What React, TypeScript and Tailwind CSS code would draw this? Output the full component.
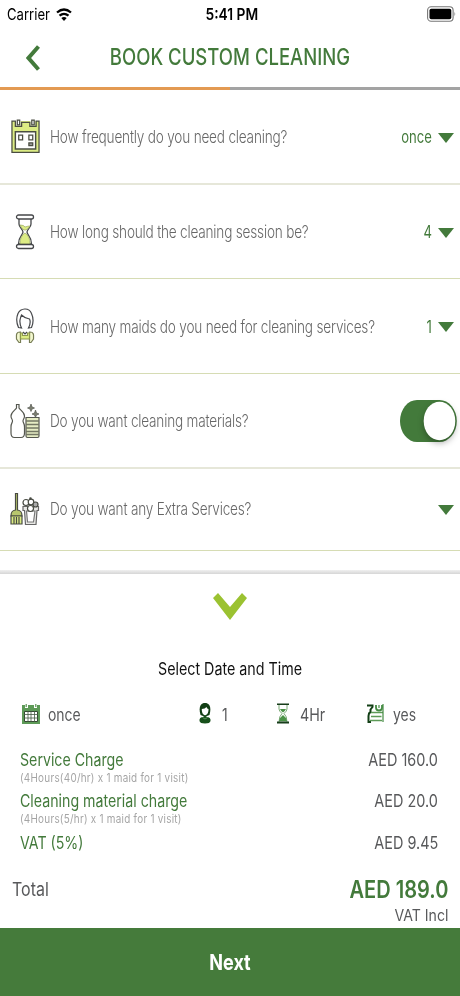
import React from 'react';
import clsx from 'clsx';

const Label: React.FC<{ className?: string; children: React.ReactNode }> = ({ className, children }) => (
  <span className={clsx('block whitespace-nowrap', className)}>{children}</span>
);

const CalendarIcon = () => (
  <svg width="29" height="35" viewBox="0 0 30 36" fill="none" stroke="#4a4d42" strokeWidth="1.3">
    <path d="M1 2H5V7H10V2H20V7H25V2H29V34.500H1Z" fill="#dcec84" stroke="none" />
    <path d="M1 34.500V2H4.500V7.500H11V3.500H19.500V7.500H26V2H29V34.500Z" />
    <path d="M6.500 1H9V6H6.500ZM21.500 1H24V6H21.500Z" fill="#fff" />
    <path d="M4.500 13H25.500V31H4.500Z" fill="#fff" strokeWidth="1.500" />
    <path d="M8 16.500H12V21.500H8ZM18.500 16.500H22.500V21.500H18.500Z" />
    <path d="M18.500 24.500H22.500V27.500H18.500Z" fill="#999" />
  </svg>
);

const HourglassIcon = () => (
  <svg width="20" height="36" viewBox="0 0 20 36" fill="none" stroke="#45474a" strokeWidth="1.3">
    <path d="M4 5V10C4 14 8 15 8 18C8 21 3.500 22 3.500 30H16.500C16.500 22 12 21 12 18C12 15 16 14 16 10V5" fill="#fff" />
    <path d="M5 11Q9 11 10 13Q13 12 15 12Q14 14 11 16H9Q6 14 5 11ZM10 19Q5 22 5 30H15Q15 22 10 19Z" fill="#dcec84" stroke="#9aa85c" strokeWidth=".7" />
    <rect x="1.500" y="1" width="17" height="4" rx="2" fill="#fff" />
    <rect x="1.500" y="30.500" width="17" height="4" rx="2" fill="#fff" />
  </svg>
);

const MaidIcon = () => (
  <svg width="20" height="36" viewBox="0 0 20 36" fill="none" stroke="#45474a" strokeWidth="1.2">
    <path d="M3.500 19.500C1.500 15 1.500 9 3 5.500C5.500 0 14 -1 16.500 5.500C18.500 10 18.500 15 16.500 19.500L13.500 20C15.500 16 15.500 13 14.500 11Q10 10.500 6.500 7Q5.500 9.500 5 12Q4.500 16 6.500 20Z" />
    <path d="M5 24C.5 24 1.500 28 1.500 31L4 34.500H5.500V24ZM15 24C19.500 24 18.500 28 18.500 31L16 34.500H14.500V24Z" fill="#f3f8cf" stroke="#777d55" />
    <path d="M5.500 25H7.500V27.500H12.500V25H14.500V31H5.500Z" fill="#dcec84" stroke="#8c964e" />
    <path d="M8 24L10 26L12 24" />
  </svg>
);

const MaterialsIcon = () => (
  <svg width="30" height="36" viewBox="0 0 30 36" fill="none" stroke="#55574f" strokeWidth="1.2">
    <path d="M6.500 1.500H9V5C10 7 14.500 9 14.500 13C14.500 16 13 16 13 18C13 20 14.500 20 14.500 24V30C14.500 33 13.500 34.500 11 34.500H4.500C2 34.500 1 33 1 30V24C1 20 2.500 20 2.500 18C2.500 16 1 16 1 13C1 9 5.500 7 6.500 5Z" />
    <path d="M16 14.500H29V33Q29 34.500 27.500 34.500H17.500Q16 34.500 16 33Z" fill="#e6edc4" />
    <path d="M16 18H29M16 21.500H29M16 25H29M16 28.500H29M16 31.500H29" stroke="#747864" strokeWidth="1.500" />
    <path d="M21 1L22 4L24.500 5L22 6L21 8.500L20 6L17.500 5L20 4ZM25.500 7L26.500 10L29 11L26.500 12L25.500 14.500L24.500 12L22 11L24.500 10Z" fill="#7a7d70" strokeWidth=".7" />
  </svg>
);

const ExtrasIcon = () => (
  <svg width="30" height="34" viewBox="0 0 30 34" fill="none" stroke="#484b43" strokeWidth="1.2">
    <path d="M5.500 1.500H7.500V18C11 18.500 12 20 12 24H1C1 20 2 18.500 5.500 18Z" fill="#b8c66e" />
    <path d="M1 24H12V32H1ZM4 25V32M6.500 25V32M9 25V32" fill="#dcec84" />
    <path d="M13 14.500H28.500V18.500H27L26 32.500H15.500L14.500 18.500H13Z" fill="#e8e8e5" stroke="#666" />
    <path d="M16.500 19H25L23.500 30H17.500Z" fill="#fff" stroke="#777" />
    <circle cx="16" cy="10.500" r="3" fill="#fff" />
    <circle cx="21" cy="10" r="2.800" fill="#fff" />
    <circle cx="25.500" cy="12.500" r="2.500" fill="#aaa" />
    <circle cx="20.500" cy="16.500" r="3" fill="#fff" />
    <circle cx="20.500" cy="6.500" r=".7" />
  </svg>
);

const Caret = () => (
  <svg width="16" height="12" viewBox="0 0 16 12" className="shrink-0">
    <path d="M0 2H16L8 12Z" fill="#437a3b" />
  </svg>
);

const Toggle = () => (
  <svg width="57" height="42" viewBox="0 0 57 42" className="mr-[3px] shrink-0 overflow-visible">
    <path d="M17 0H39.500A17.300 21 0 0 1 39.500 42H17A17 21 0 0 1 17 0Z" fill="#437a3b" />
    <ellipse cx="39.500" cy="21" rx="15.800" ry="19.300" fill="#fff" className="drop-shadow-[0_3px_3px_rgba(0,0,0,0.3)]" />
  </svg>
);

const questions = [
  { icon: <CalendarIcon />, text: 'How frequently do you need cleaning?', value: 'once', row: 'h-[95px] border-b-2 border-[#e6e7d9]' },
  { icon: <HourglassIcon />, text: 'How long should the cleaning session be?', value: '4', row: 'h-[94px] border-b border-[#d6dcb4]' },
  { icon: <MaidIcon />, text: 'How many maids do you need for cleaning services?', value: '1', row: 'h-[95px] border-b border-[#d6dcb4]' },
  { icon: <MaterialsIcon />, text: 'Do you want cleaning materials?', toggle: true, row: 'h-[95px] border-b-2 border-[#e6e7d9]' },
  { icon: <ExtrasIcon />, text: 'Do you want any Extra Services?', value: '', row: 'h-[82px] border-b border-[#d6dcb4] pb-0.5' },
];

const SmallCalendar = () => (
  <svg width="18" height="20" viewBox="0 0 18 20">
    <path d="M0 1H3V4H6V1H12V4H15V1H18V20H0Z" fill="#5d9a57" />
    <path d="M3.500 0H5V3H3.500ZM13 0H14.500V3H13Z" fill="#78a873" />
    <path d="M2.500 7.500H15.500V17.500H2.500Z" fill="#fff" stroke="#344a32" />
    <path d="M6 7V18M9 7V18M12.500 7V18M2 10.500H16M2 14H16" stroke="#455a43" strokeWidth=".8" />
  </svg>
);

const SmallMaid = () => (
  <svg width="12" height="21" viewBox="0 0 12 21">
    <path d="M1.500 12C-.5 5 1 0 6 0S12.500 5 10.500 12L8 13H4Z" fill="#123f15" />
    <path d="M2.800 6Q6 6 7.500 4Q8 6 9.500 6Q9.800 11 6 12.500Q2.500 11 2.800 6Z" fill="#fff" />
    <path d="M4.500 12.500H7.500V14Q12 14 11.500 18Q11 20.500 6 20.500T.5 18Q0 14 4.500 14Z" fill="#17501b" />
    <path d="M3.500 14.500L6 16L8.500 14.500" stroke="#5a915a" fill="none" />
  </svg>
);

const SmallHourglass = () => (
  <svg width="12" height="21" viewBox="0 0 12 21">
    <path d="M2 2V6Q2 8 5 10.500Q2 13 2 19H10Q10 13 7 10.500Q10 8 10 6V2" fill="#fff" stroke="#7cab78" />
    <path d="M3 6H9Q8 8 6 9.500Q4 8 3 6ZM6 12Q9 14 10 18H2Q3 14 6 12Z" fill="#4b9347" />
    <path d="M0 .5H12V2H0ZM0 18.500H12V20.500H0Z" fill="#173d1a" />
  </svg>
);

const SmallMaterials = () => (
  <svg width="17" height="19" viewBox="0 0 17 19" fill="none">
    <path d="M0 1.500H5.500V3L3.500 5.500V8Q1.500 9 1.500 12V18H4" stroke="#123f15" strokeWidth="2" />
    <path d="M4 8.500H16M4 12.500H14.500M3 16.500H15" stroke="#5d9a57" strokeWidth="1.300" />
    <path d="M9 1V3.500Q9 6.500 12 6.500T15 3.500V1" stroke="#438a42" strokeWidth="1.800" />
    <path d="M16 0V18M12 1V4" stroke="#438a42" strokeWidth="1.200" />
  </svg>
);

const charges = [
  { name: 'Service Charge', note: '(4Hours(40/hr) x 1 maid for 1 visit)', amount: 'AED 160.0' },
  { name: 'Cleaning material charge', note: '(4Hours(5/hr) x 1 maid for 1 visit)', amount: 'AED 20.0' },
  { name: 'VAT (5%)', amount: 'AED 9.45' },
];

const App: React.FC = () => {
  return (
    <div className="flex h-[996px] w-[460px] flex-col overflow-hidden bg-white font-['Inter',sans-serif] text-[#58595b]">
      {/* Status bar */}
      <div className="grid h-7 shrink-0 grid-cols-3 items-center pl-[7px] pr-1 text-black">
        <div className="flex items-center">
          <div className="w-[49px]">
            <Label className="origin-left scale-x-[0.82] text-base leading-6">Carrier</Label>
          </div>
          <svg width="16" height="13" viewBox="0 0 16 13" fill="none" stroke="#000" strokeWidth="2.300">
            <path d="M1 4.500Q8 -1.500 15 4.500M3.500 7.700Q8 4 12.500 7.700" />
            <path d="M5.300 10Q8 7.800 10.700 10L8 13Z" fill="#000" stroke="none" />
          </svg>
        </div>
        <Label className="scale-x-[0.86] text-center text-base font-semibold leading-6">5:41 PM</Label>
        <svg width="29" height="16" viewBox="0 0 29 16" className="justify-self-end">
          <rect x=".6" y=".8" width="25.500" height="14.400" rx="3.500" fill="#fff" stroke="#777" strokeWidth="1.100" />
          <rect x="2.500" y="2.800" width="21.800" height="10.400" rx="1.800" />
          <path d="M27.500 5.500Q29 8 27.500 10.500Z" fill="#777" />
        </svg>
      </div>

      {/* Header */}
      <div className="flex h-[59px] shrink-0 items-center">
        <svg width="14" height="26" viewBox="0 0 14 26" fill="none" className="ml-[26px]">
          <path d="M12.500 1.500L2.500 13L12.500 24.500" stroke="#437a3b" strokeWidth="4" />
        </svg>
        <Label className="ml-10 w-[300px] scale-x-[0.805] text-center text-[23px] font-medium text-[#437a3b]">BOOK CUSTOM CLEANING</Label>
      </div>
      <div className="flex h-[3px] shrink-0">
        <div className="w-1/2 bg-[#e39a52]" />
        <div className="w-1/2 bg-[#a3a3a3]" />
      </div>

      {/* Questions */}
      {questions.map((q) => (
        <div key={q.text} className={clsx('flex shrink-0 items-center', q.row)}>
          <div className="flex w-[50px] shrink-0 justify-center">{q.icon}</div>
          <div className="min-w-0 flex-1 pt-[3px]">
            <Label className="origin-left scale-x-[0.8] text-[17px] font-light tracking-[-0.25px] text-[#666]">{q.text}</Label>
          </div>
          {q.toggle ? (
            <Toggle />
          ) : (
            <div className="mr-1.5 flex items-center gap-1.5">
              <Label className="origin-right scale-x-[0.77] pt-[3px] text-[17px] text-[#437a3b]">{q.value}</Label>
              <Caret />
            </div>
          )}
        </div>
      ))}

      {/* Summary sheet */}
      <div className="mt-[19px] h-1 shrink-0 bg-linear-to-b from-[#f0f0f0] to-[#d6d6d6]" />
      <div className="flex min-h-0 flex-1 flex-col">
        <div className="flex h-[66px] justify-center pt-[19px]">
          <svg width="34" height="27" viewBox="0 0 34 27">
            <path d="M0 5L5 0L17 14L29 0L34 5L17 27Z" fill="#9bc231" />
          </svg>
        </div>
        <Label className="mt-[18px] scale-x-[0.84] text-center text-[17px] leading-6 text-[#111]">Select Date and Time</Label>

        <div className="mt-[21px] flex h-6 shrink-0 items-center text-[17px] leading-6">
          <div className="flex w-[176px] items-center gap-2 pl-[22px]">
            <SmallCalendar />
            <Label className="origin-left scale-x-[0.82] pt-0.5">once</Label>
          </div>
          <div className="flex w-[79px] items-center gap-[11px] pl-[23px]">
            <SmallMaid />
            <Label className="origin-left scale-x-[0.82] pt-0.5">1</Label>
          </div>
          <div className="flex w-[90px] items-center gap-[11px] pl-[22px]">
            <SmallHourglass />
            <Label className="origin-left scale-x-[0.84] pt-0.5">4Hr</Label>
          </div>
          <div className="flex items-center gap-[9px] pl-[22px]">
            <SmallMaterials />
            <Label className="origin-left scale-x-[0.82] pt-0.5">yes</Label>
          </div>
        </div>

        <div className="mt-[22px] shrink-0 pl-5 pr-[22px]">
          {charges.map((c) => (
            <div key={c.name} className="flex h-[41.500px] justify-between">
              <div>
                <Label className="origin-left scale-x-[0.835] text-[17px] leading-6 text-[#437a3b]">{c.name}</Label>
                <Label className="origin-left scale-x-[0.86] text-[11.5px] leading-3 tracking-[0.3px] text-[#a5a5a5]">{c.note}</Label>
              </div>
              <Label className="origin-right scale-x-[0.85] text-[17px] leading-6">{c.amount}</Label>
            </div>
          ))}
        </div>

        <div className="flex shrink-0 justify-between pl-3 pr-3 pt-1.5">
          <Label className="origin-left scale-x-[0.84] text-[19px] leading-6">Total</Label>
          <div>
            <Label className="origin-right scale-x-[0.835] text-right text-2xl font-semibold leading-6 text-[#437a3b]">AED 189.0</Label>
            <Label className="origin-right scale-x-[0.88] text-right text-base leading-[26px]">VAT Incl</Label>
          </div>
        </div>
      </div>

      <button className="h-[68px] shrink-0 bg-[#457b3b] text-[22px] font-bold text-white">
        <Label className="scale-x-[0.82]">Next</Label>
      </button>
    </div>
  );
};

export default App;
